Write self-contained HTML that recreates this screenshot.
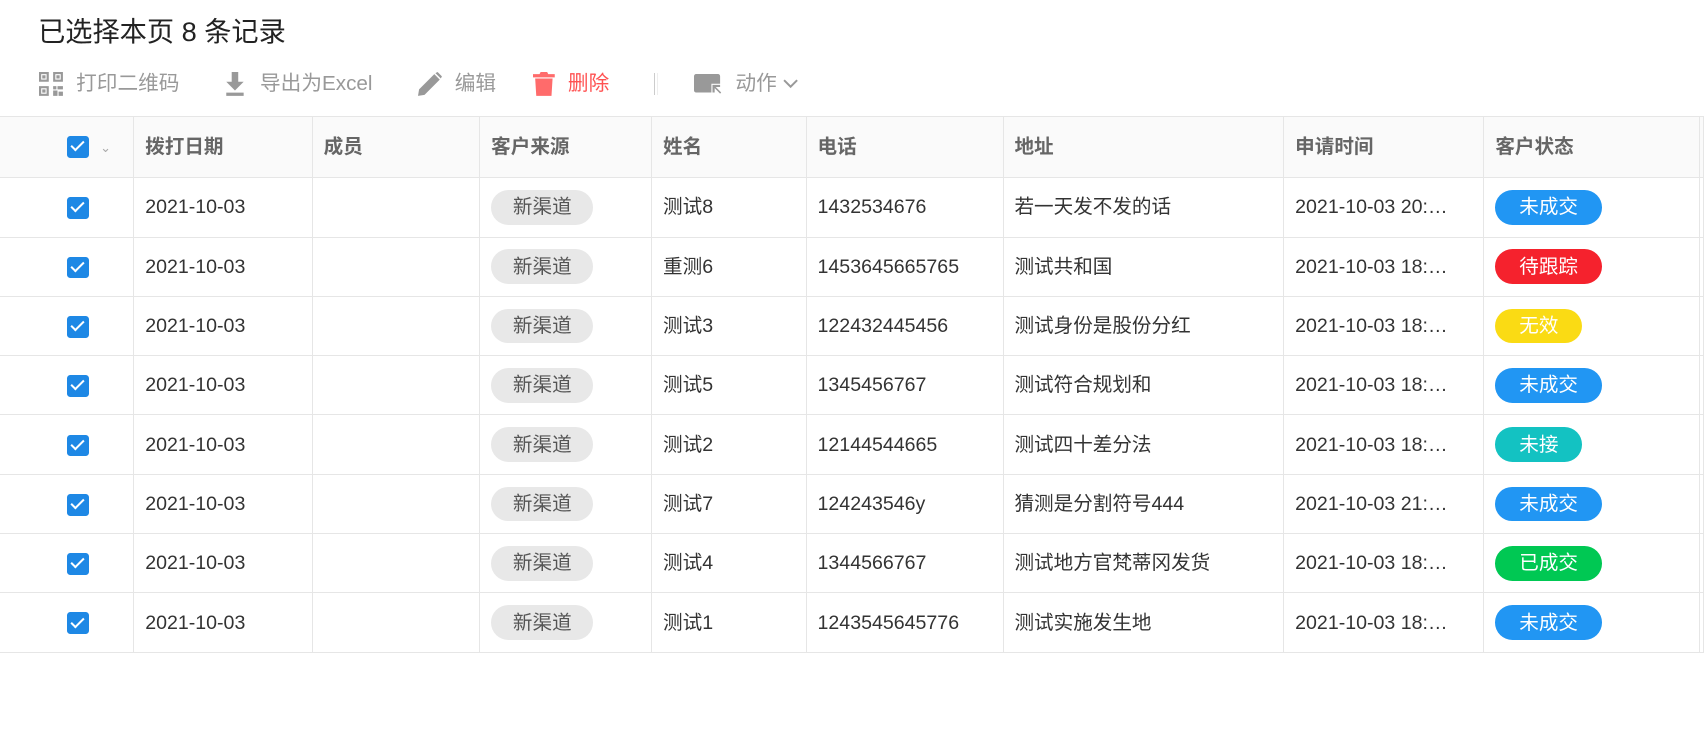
<!DOCTYPE html><html><head><meta charset="utf-8"><style>
body{margin:0;width:1706px;height:741px;background:#fff;font-family:"Liberation Sans","Noto Sans CJK SC",sans-serif;color:#333;overflow:hidden}
#w{zoom:1.088;position:relative;width:1568px;height:681px}
.t{position:absolute;left:35px;top:8px;font-size:25px;color:#222}
.tb{position:absolute;top:64px;font-size:19px;color:#999;display:flex;align-items:center;line-height:26px}
.tb svg{margin-right:12px}
table{position:absolute;left:0;top:107px;border-collapse:collapse;table-layout:fixed;width:1566px}
td,th{border:1px solid #e6e6e6;height:53.6px;padding:0 0 0 10px;font-size:18px;line-height:24px;text-align:left;white-space:nowrap;overflow:hidden;vertical-align:middle}
tr>*:first-child{border-left:none}
th{background:#fafafa;color:#666;font-weight:bold;height:55px}
.cb{display:inline-block;width:20px;height:20px;background:#1e88e5;border-radius:3px;vertical-align:middle;position:relative}
.cb:after{content:"";position:absolute;left:6px;top:2px;width:5px;height:10px;border:solid #fff;border-width:0 2.5px 2.5px 0;transform:rotate(45deg)}
.src{display:inline-block;background:#e8e8e8;color:#555;border-radius:16px;padding:4px 20px;line-height:24px;vertical-align:middle}
.st{display:inline-block;color:#fff;border-radius:16px;padding:4px 22px;font-size:18px;line-height:24px;vertical-align:middle}
</style></head><body><div id="w">
<div class="t">已选择本页 8 条记录</div>
<div class="tb" style="left:36px"><svg width="22" height="22" viewBox="0 0 22 22" fill="#999"><path d="M0 0h9v9H0zM2 2v5h5V2zM3 3h3v3H3zM13 0h9v9h-9zM15 2v5h5V2zM16 3h3v3h-3zM0 13h9v9H0zM2 15v5h5v-5zM3 16h3v3H3zM13 13h3v3h-3zM17 13h5v3h-5zM13 17h4v5h-4zM18 18h4v4h-4z"/></svg>打印二维码</div>
<div class="tb" style="left:205px"><svg width="22" height="22" viewBox="0 0 22 22" fill="#999"><path d="M8 0h6v9h5l-8 8-8-8h5zM3 19h16v3H3z"/></svg>导出为Excel</div>
<div class="tb" style="left:384px"><svg width="22" height="22" viewBox="0 0 22 22" fill="#999"><path d="M0 22l1-6L15 2l5 5L6 21zM16 1l2-1 4 4-1 2z"/></svg>编辑</div>
<div class="tb" style="left:490px;color:#ff5252"><svg width="20" height="22" viewBox="0 0 20 22" fill="#ff6b6b"><path d="M0 2h6l1-2h6l1 2h6v3H0zM2 6h16l-1 16H3z"/></svg>删除</div>
<div style="position:absolute;left:601px;top:67px;width:2px;height:20px;border-left:1px solid #ccc;border-right:1px solid #eee"></div>
<div class="tb" style="left:638px"><svg width="26" height="18" viewBox="0 0 26 18" fill="#999"><path d="M2 0h20a2 2 0 0 1 2 2v7h-8v8H2a2 2 0 0 1-2-2V2a2 2 0 0 1 2-2z"/><path d="M17 10v7h2v-4l5 5 1-1-5-5h4v-2z"/></svg>动作 <svg style="margin:0 0 0 6px" width="14" height="10" viewBox="0 0 14 10"><path d="M1 2l6 6 6-6" stroke="#999" stroke-width="1.8" fill="none"/></svg></div>
<table>
<colgroup><col style="width:123px"><col style="width:164px"><col style="width:154px"><col style="width:158px"><col style="width:142px"><col style="width:181px"><col style="width:258px"><col style="width:184px"><col style="width:198px"><col style="width:4px"></colgroup>
<tr><th style="padding-left:62px"><span class="cb"></span><span style="color:#aaa;font-size:12px;margin-left:10px;font-weight:normal">&#8964;</span></th><th>拨打日期</th><th>成员</th><th>客户来源</th><th>姓名</th><th>电话</th><th>地址</th><th>申请时间</th><th>客户状态</th><th></th></tr>
<tr><td style="padding-left:62px"><span class="cb"></span></td><td>2021-10-03</td><td></td><td><span class="src">新渠道</span></td><td>测试8</td><td>1432534676</td><td>若一天发不发的话</td><td>2021-10-03 20:…</td><td><span class="st" style="background:#2196f3">未成交</span></td><td></td></tr>
<tr><td style="padding-left:62px"><span class="cb"></span></td><td>2021-10-03</td><td></td><td><span class="src">新渠道</span></td><td>重测6</td><td>1453645665765</td><td>测试共和国</td><td>2021-10-03 18:…</td><td><span class="st" style="background:#f5222d">待跟踪</span></td><td></td></tr>
<tr><td style="padding-left:62px"><span class="cb"></span></td><td>2021-10-03</td><td></td><td><span class="src">新渠道</span></td><td>测试3</td><td>122432445456</td><td>测试身份是股份分红</td><td>2021-10-03 18:…</td><td><span class="st" style="background:#fadb14">无效</span></td><td></td></tr>
<tr><td style="padding-left:62px"><span class="cb"></span></td><td>2021-10-03</td><td></td><td><span class="src">新渠道</span></td><td>测试5</td><td>1345456767</td><td>测试符合规划和</td><td>2021-10-03 18:…</td><td><span class="st" style="background:#2196f3">未成交</span></td><td></td></tr>
<tr><td style="padding-left:62px"><span class="cb"></span></td><td>2021-10-03</td><td></td><td><span class="src">新渠道</span></td><td>测试2</td><td>12144544665</td><td>测试四十差分法</td><td>2021-10-03 18:…</td><td><span class="st" style="background:#13c2c2">未接</span></td><td></td></tr>
<tr><td style="padding-left:62px"><span class="cb"></span></td><td>2021-10-03</td><td></td><td><span class="src">新渠道</span></td><td>测试7</td><td>124243546y</td><td>猜测是分割符号444</td><td>2021-10-03 21:…</td><td><span class="st" style="background:#2196f3">未成交</span></td><td></td></tr>
<tr><td style="padding-left:62px"><span class="cb"></span></td><td>2021-10-03</td><td></td><td><span class="src">新渠道</span></td><td>测试4</td><td>1344566767</td><td>测试地方官梵蒂冈发货</td><td>2021-10-03 18:…</td><td><span class="st" style="background:#00c853">已成交</span></td><td></td></tr>
<tr><td style="padding-left:62px"><span class="cb"></span></td><td>2021-10-03</td><td></td><td><span class="src">新渠道</span></td><td>测试1</td><td>1243545645776</td><td>测试实施发生地</td><td>2021-10-03 18:…</td><td><span class="st" style="background:#2196f3">未成交</span></td><td></td></tr>
</table>
</div></body></html>
